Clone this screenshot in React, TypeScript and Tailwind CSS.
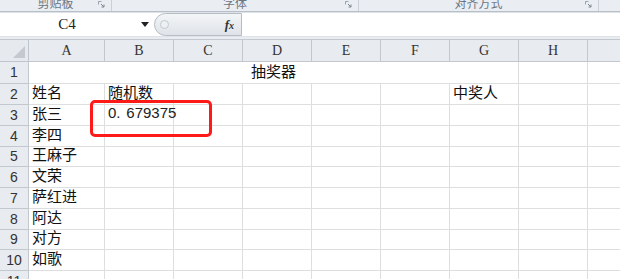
import React from "react";

const cols = ["A", "B", "C", "D", "E", "F", "G", "H"];
const rowHeights = ["h-[22px]", "h-[21px]", "h-[21px]", "h-[21px]", "h-[20px]", "h-[21px]", "h-[21px]", "h-[21px]", "h-[20px]", "h-[21px]", "h-[21px]"];
const names = ["", "姓名", "张三", "李四", "王麻子", "文荣", "萨红进", "阿达", "对方", "如歌", ""];

const cjk = { fontFamily: '"Noto Sans CJK SC", sans-serif' };

const Launcher = () => (
  <svg width="7" height="7" viewBox="0 0 7 7" className="absolute right-[6px] top-[1px]">
    <path d="M0.5 0.5h3M0.5 0.5v3" stroke="#9aa3ad" strokeWidth="1" fill="none" />
    <path d="M3 3l3 3M6 3.5v2.5h-2.5" stroke="#7a8591" strokeWidth="1" fill="none" />
  </svg>
);

const RibbonGroup = ({ label, width }: { label: string; width: string }) => (
  <div className={`relative ${width} h-full border-r border-[#c9d0d8] overflow-hidden`}>
    <div className="absolute inset-x-0 top-[-6px] text-center text-[12px] text-[#6b7684]" style={cjk}>
      {label}
    </div>
    <Launcher />
  </div>
);

const Cell = ({ children, className = "" }: { children?: React.ReactNode; className?: string }) => (
  <div className={`flex items-end border-r border-b border-[#dcdee0] pb-[1px] whitespace-nowrap overflow-visible text-[15px] text-[#111] ${className}`} style={cjk}>
    {children}
  </div>
);

export default function App() {
  return (
    <div className="w-[620px] h-[279px] overflow-hidden bg-white relative">
      {/* ribbon bottom */}
      <div className="flex h-[12px] bg-[#eaeef3] border-b border-[#b7bfc9]">
        <RibbonGroup label="剪贴板" width="w-[112px]" />
        <RibbonGroup label="字体" width="w-[247px]" />
        <RibbonGroup label="对齐方式" width="w-[240px]" />
        <div className="flex-1" />
      </div>
      {/* formula bar */}
      <div className="flex h-[25px] bg-white border-t border-[#dfe3e8] border-b border-[#b9c0c8]">
        <div className="relative w-[154px] flex items-center">
          <div className="w-[134px] text-center text-[15px] text-[#222]" style={{ fontFamily: '"Liberation Serif", serif' }}>
            C4
          </div>
          <svg width="8" height="5" viewBox="0 0 8 5" className="absolute left-[141px] top-[9px]">
            <path d="M0 0h8L4 5z" fill="#222" />
          </svg>
        </div>
        <div className="flex items-center w-[88px] h-full rounded-l-full border border-[#b4bcc5] bg-gradient-to-b from-[#f3f5f7] to-[#dfe3e8] px-[4px]">
          <div className="w-[9px] h-[9px] rounded-full border border-[#c3c9d0] bg-[#eef1f4] ml-[1px]" />
          <div className="flex-1" />
          <span className="italic font-bold text-[13px] text-[#333] mr-[3px]" style={{ fontFamily: '"Liberation Serif", serif' }}>
            f<span className="text-[10px]">x</span>
          </span>
        </div>
        <div className="flex-1 bg-white" />
      </div>
      <div className="h-[2px] bg-[#e9edf1]" />
      {/* sheet */}
      <div className="grid grid-cols-[29px_76px_69px_69px_69px_69px_69px_69px_69px_1fr] border-t border-[#c3c8ce]">
        {/* header row */}
        <div className="h-[22px] relative bg-[#e6e9ed] border-r border-b border-[#bfc5cc]">
          <svg width="12" height="12" viewBox="0 0 12 12" className="absolute right-[3px] bottom-[3px]">
            <path d="M12 0V12H0z" fill="#c4c9cf" />
          </svg>
        </div>
        {cols.map((c) => (
          <div
            key={c}
            className="h-[22px] flex items-center justify-center bg-[#e8ebef] border-r border-b border-[#c3c8ce] text-[14px] text-[#333]"
            style={{ fontFamily: '"Liberation Serif", serif' }}
          >
            {c}
          </div>
        ))}
        <div className="h-[22px] bg-[#e8ebef] border-b border-[#c3c8ce]" />
        {/* body rows */}
        {rowHeights.map((h, i) => {
          const r = i + 1;
          return (
            <React.Fragment key={r}>
              <div
                className={`${h} flex items-center justify-center bg-[#e8ebef] border-r border-b border-[#c3c8ce] text-[14px] text-[#333]`}
                style={{ fontFamily: '"Liberation Sans", sans-serif' }}
              >
                {r}
              </div>
              {r === 1 ? (
                <>
                  <Cell className={`${h} col-span-7 justify-center`}>抽奖器</Cell>
                  <Cell className={h} />
                  <Cell className={`${h} border-r-0`} />
                </>
              ) : (
                <>
                  <Cell className={`${h} pl-[3px]`}>{names[i]}</Cell>
                  <Cell className={`${h} pl-[3px]`}>
                    {r === 2 ? "随机数" : r === 3 ? (
                      <span className="text-[15px] text-[#222]" style={{ fontFamily: '"Liberation Sans", sans-serif' }}>
                        0<span className="inline-block w-[10px]">.</span>679375
                      </span>
                    ) : null}
                  </Cell>
                  <Cell className={h} />
                  <Cell className={h} />
                  <Cell className={h} />
                  <Cell className={h} />
                  <Cell className={`${h} pl-[3px]`}>{r === 2 ? "中奖人" : null}</Cell>
                  <Cell className={h} />
                  <Cell className={`${h} border-r-0`} />
                </>
              )}
            </React.Fragment>
          );
        })}
      </div>
      {/* red annotation box */}
      <div className="absolute left-[90px] top-[100px] w-[122px] h-[37px] border-[3px] border-[#ff1a1a] rounded-[5px]" />
    </div>
  );
}
